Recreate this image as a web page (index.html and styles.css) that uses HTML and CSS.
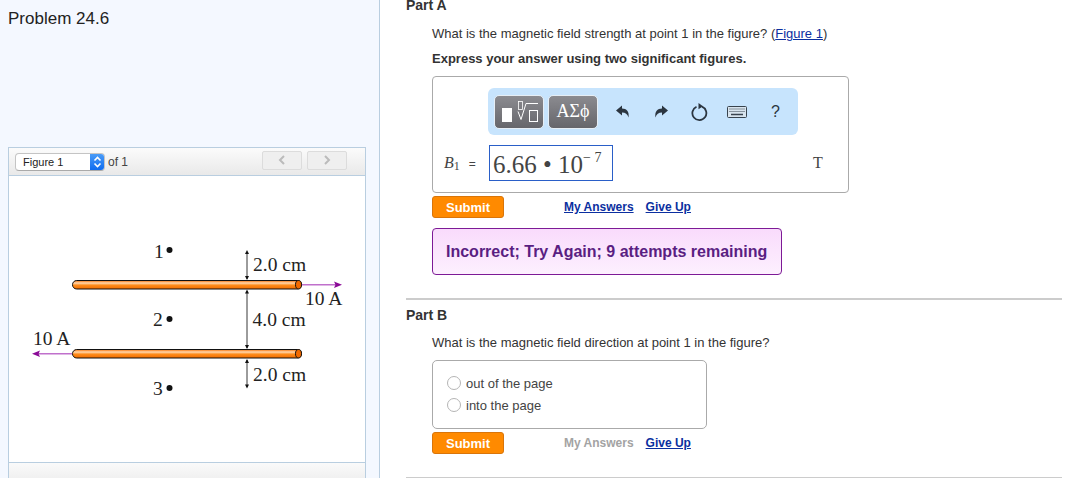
FILE: index.html
```html
<!DOCTYPE html>
<html lang="en">
<head>
<meta charset="UTF-8">
<meta name="viewport" content="width=device-width, initial-scale=1.0">
<title>Problem 24.6</title>
<link rel="stylesheet" href="styles.css">
</head>
<body>

<div class="page">
  <aside class="sidebar">
    <h1 class="problem-title">Problem 24.6</h1>

    <div class="figure-panel">
      <div class="figure-toolbar">
        <div class="figure-select">
          <span class="figure-select-label">Figure 1</span>
          <span class="figure-select-arrows">
            <svg width="9" height="12" viewBox="0 0 9 12"><path d="M1.5 4.5 L4.5 1.5 L7.5 4.5 M1.5 7.5 L4.5 10.5 L7.5 7.5" fill="none" stroke="#fff" stroke-width="1.6"/></svg>
          </span>
        </div>
        <span class="figure-count">of 1</span>
        <div class="figure-nav">
          <button class="nav-button"><svg width="8" height="10" viewBox="0 0 8 10"><path d="M6 1 L2 5 L6 9" fill="none" stroke="#bbb" stroke-width="2"/></svg></button>
          <button class="nav-button"><svg width="8" height="10" viewBox="0 0 8 10"><path d="M2 1 L6 5 L2 9" fill="none" stroke="#bbb" stroke-width="2"/></svg></button>
        </div>
      </div>

      <svg class="figure-image" width="356" height="286" viewBox="9 176 356 286">
        <defs>
          <linearGradient id="wire" x1="0" y1="0" x2="0" y2="1">
            <stop offset="0" stop-color="#f46c00"/>
            <stop offset="0.3" stop-color="#ffd8b0"/>
            <stop offset="0.55" stop-color="#ff8c1a"/>
            <stop offset="1" stop-color="#f06c00"/>
          </linearGradient>
        </defs>

        <line x1="302" y1="284.7" x2="336" y2="284.7" stroke="#c070cc" stroke-width="1.4"/>
        <path d="M342 284.7 L334 281.4 L335.5 284.7 L334 288 Z" fill="#8a0a96"/>
        <line x1="72" y1="353.7" x2="38" y2="353.7" stroke="#c070cc" stroke-width="1.4"/>
        <path d="M32 353.7 L40 350.4 L38.5 353.7 L40 357 Z" fill="#8a0a96"/>

        <rect x="72.5" y="280.5" width="229" height="8.5" rx="4.2" fill="url(#wire)" stroke="#111" stroke-width="1"/>
        <ellipse cx="298.500" cy="284.7" rx="3" ry="4.2" fill="#f26a00" stroke="#111" stroke-width="1"/>
        <rect x="72.5" y="349.5" width="229" height="8.5" rx="4.2" fill="url(#wire)" stroke="#111" stroke-width="1"/>
        <ellipse cx="298.500" cy="353.7" rx="3" ry="4.2" fill="#f26a00" stroke="#111" stroke-width="1"/>

        <g stroke="#222" stroke-width="0.9" fill="none">
          <line x1="247" y1="252" x2="247" y2="279"/>
          <line x1="247" y1="291" x2="247" y2="348"/>
          <line x1="247" y1="360" x2="247" y2="387"/>
        </g>
        <g fill="#111">
          <path d="M247 250 L245 254 H249 Z"/>
          <path d="M247 280 L245 276 H249 Z"/>
          <path d="M247 289.500 L245 293.500 H249 Z"/>
          <path d="M247 349 L245 345 H249 Z"/>
          <path d="M247 359 L245 363 H249 Z"/>
          <path d="M247 388.500 L245 384.500 H249 Z"/>
          <circle cx="169.500" cy="250" r="3"/>
          <circle cx="169.500" cy="319" r="3"/>
          <circle cx="169.500" cy="388" r="3"/>
        </g>

        <g class="figure-text">
          <text x="154" y="257.500">1</text>
          <text x="153" y="325.500">2</text>
          <text x="153" y="395">3</text>
          <text x="253" y="271">2.0 cm</text>
          <text x="252.500" y="326">4.0 cm</text>
          <text x="253" y="381">2.0 cm</text>
          <text x="305" y="304.500">10 A</text>
          <text x="33" y="345">10 A</text>
        </g>
      </svg>

      <div class="figure-footer"></div>
    </div>
  </aside>

  <main class="content">
    <h2 class="part-title part-a">Part A</h2>
    <div class="part-body">
      <p class="question">What is the magnetic field strength at point 1 in the figure? (<a href="#">Figure 1</a>)</p>
      <p class="instruction">Express your answer using two significant figures.</p>

      <div class="answer-box">
        <div class="math-toolbar">
          <button class="tool-button tool-templates">
            <svg width="38" height="32" viewBox="0 0 38 32">
              <rect x="2" y="12" width="10" height="14" fill="#fff"/>
              <rect x="18.500" y="5.500" width="4" height="8" fill="none" stroke="#fff" stroke-width="0.8"/>
              <path d="M18 15.500 L21 23.500 L26 7.500 H38" fill="none" stroke="#fff" stroke-width="1"/>
              <rect x="29.500" y="14.500" width="8" height="11" fill="none" stroke="#fff"/>
            </svg>
          </button>
          <button class="tool-button tool-symbols">&Alpha;&Sigma;&#981;</button>
          <span class="tool-icon icon-undo">
            <svg width="16" height="16" viewBox="0 0 16 16"><path d="M1 6.500 L7 1.500 V4.500 C11.500 4.500 14.500 7.500 13.500 13.500 C12.500 10 10.500 8.500 7 8.500 V11.500 Z" fill="#2b3540"/></svg>
          </span>
          <span class="tool-icon icon-redo">
            <svg width="16" height="16" viewBox="0 0 16 16"><path d="M15 6.500 L9 1.500 V4.500 C4.500 4.500 1.500 7.500 2.500 13.500 C3.500 10 5.500 8.500 9 8.500 V11.500 Z" fill="#2b3540"/></svg>
          </span>
          <span class="tool-icon icon-reset">
            <svg width="18" height="18" viewBox="0 0 18 18"><path d="M6.500 3.700 A7 7 0 1 0 12 3.600" fill="none" stroke="#2b3540" stroke-width="1.800"/><path d="M8.500 0 L13 3.200 L8.500 6.200 Z" fill="#2b3540"/></svg>
          </span>
          <span class="tool-icon icon-keyboard">
            <svg width="20" height="12" viewBox="0 0 20 12">
              <rect x="0.500" y="0.500" width="19" height="11" rx="1" fill="#d8e4ee" stroke="#38434e"/>
              <path d="M2.500 3 H17.500 M2.500 5.500 H17.500" stroke="#38434e" stroke-dasharray="1 1"/>
              <path d="M4 8.500 H16" stroke="#38434e" stroke-width="1.500"/>
            </svg>
          </span>
          <span class="tool-help">?</span>
        </div>

        <div class="answer-row">
          <span class="answer-label"><i>B</i><sub>1</sub><span class="equals">=</span></span>
          <div class="answer-input">6.66 &bull; 10<sup>&minus; 7</sup></div>
          <span class="answer-unit">T</span>
        </div>
      </div>

      <div class="action-row">
        <button class="submit-button">Submit</button>
        <a class="action-link" href="#">My Answers</a>
        <a class="action-link" href="#">Give Up</a>
      </div>

      <div class="feedback">Incorrect; Try Again; 9 attempts remaining</div>
    </div>

    <hr class="part-rule">

    <h2 class="part-title part-b">Part B</h2>
    <div class="part-body">
      <p class="question question-b">What is the magnetic field direction at point 1 in the figure?</p>

      <div class="choice-box">
        <label class="choice"><span class="radio"></span>out of the page</label>
        <label class="choice"><span class="radio"></span>into the page</label>
      </div>

      <div class="action-row action-row-b">
        <button class="submit-button">Submit</button>
        <span class="action-link action-disabled">My Answers</span>
        <a class="action-link" href="#">Give Up</a>
      </div>
    </div>

    <hr class="part-rule rule-bottom">
  </main>
</div>

</body>
</html>
```

FILE: styles.css
```css
html, body {
  margin: 0;
  height: 478px;
  overflow: hidden;
  background-color: #fff;
  font-family: 'Liberation Sans', Arial, sans-serif;
  color: #333;
}
.page {
  display: flex;
  height: 478px;
  overflow: hidden;
}

/* left column */
.sidebar {
  width: 379px;
  height: 478px;
  flex-shrink: 0;
  background-color: #f4f8ff;
  border-right: 1px solid #b9cee0;
}
.problem-title {
  margin: 0;
  padding: 10px 0 0 8px;
  height: 138px;
  box-sizing: border-box;
  font-size: 17px;
  line-height: 18px;
  font-weight: normal;
  color: #222;
}
.figure-panel {
  width: 356px;
  margin: 9px 0 0 8px;
  background-color: #fff;
  border: 1px solid #b9cee0;
  border-bottom: none;
}
.figure-toolbar {
  display: flex;
  align-items: center;
  height: 27px;
  padding-left: 6px;
  background: linear-gradient(#fbfbfb, #e9e9e9);
  border-bottom: 1px solid #b9cee0;
}
.figure-select {
  display: flex;
  width: 90px;
  height: 18px;
  box-sizing: border-box;
  background-color: #fff;
  border: 1px solid #c4c4c4;
  border-bottom-color: #aaa;
  border-radius: 4px;
  overflow: hidden;
}
.figure-select-label {
  flex: 1;
  padding-left: 7px;
  font-size: 11px;
  line-height: 16px;
  color: #222;
}
.figure-select-arrows {
  display: flex;
  align-items: center;
  justify-content: center;
  width: 14px;
  background: linear-gradient(#4a9cf8, #0f6cf0);
}
.figure-count {
  margin-left: 3px;
  font-size: 12px;
  color: #444;
}
.figure-nav {
  display: flex;
  gap: 5px;
  margin-left: 134px;
  margin-top: -3px;
}
.nav-button {
  display: flex;
  align-items: center;
  justify-content: center;
  width: 40px;
  height: 19px;
  padding: 0;
  background: #efefef;
  border: 1px solid #dcdcdc;
  border-radius: 2px;
}
.figure-image {
  display: block;
}
.figure-text text {
  font-family: 'Liberation Serif', 'Times New Roman', serif;
  font-size: 19.500px;
  fill: #222;
}
.figure-footer {
  height: 16px;
  background: linear-gradient(#fafafa, #f0f0f0);
  border-top: 1px solid #b9cee0;
}

/* right column */
.content {
  width: 656px;
  margin-left: 26px;
}
.part-title {
  margin: 0;
  font-size: 14px;
  line-height: 15px;
  font-weight: bold;
  color: #333;
}
.part-a {
  margin-top: -2px;
}
.part-b {
  margin-top: 8px;
}
.part-body {
  padding-left: 26px;
}
.question {
  margin: 13px 0 0;
  font-size: 13px;
  line-height: 16px;
  color: #333;
}
.question a {
  color: #0b2fa0;
}
.question-b {
  margin-top: 12px;
}
.instruction {
  margin: 9px 0 0;
  font-size: 13px;
  line-height: 16px;
  font-weight: bold;
  color: #333;
}
.answer-box {
  width: 417px;
  height: 117px;
  box-sizing: border-box;
  margin-top: 9px;
  padding: 11px 0 0 10px;
  border: 1px solid #aaa;
  border-radius: 4px;
}
.math-toolbar {
  display: flex;
  align-items: center;
  width: 310px;
  height: 47px;
  box-sizing: border-box;
  margin-left: 45px;
  padding-left: 6px;
  background-color: #c7e4fd;
  border-radius: 6px;
}
.tool-button {
  height: 34px;
  padding: 0;
  color: #fff;
  background: linear-gradient(#8b8b90, #66666b);
  border: 1px solid #e6eef5;
  border-radius: 5px;
}
.tool-templates {
  display: flex;
  align-items: center;
  justify-content: center;
  width: 50px;
}
.tool-symbols {
  width: 50px;
  margin-left: 4px;
  font-family: 'Liberation Serif', serif;
  font-size: 18px;
}
.tool-icon {
  display: flex;
  align-items: center;
  justify-content: center;
  height: 20px;
}
.icon-undo {
  width: 20px;
  margin-left: 15px;
}
.icon-redo {
  width: 20px;
  margin-left: 18px;
}
.icon-reset {
  width: 20px;
  margin-left: 18px;
}
.icon-keyboard {
  width: 20px;
  margin-left: 18px;
}
.tool-help {
  margin-left: 24px;
  font-size: 16px;
  color: #2b3540;
}
.answer-row {
  display: flex;
  align-items: center;
  height: 36px;
  margin-top: 10px;
}
.answer-label {
  width: 45px;
  margin-left: 1px;
  font-family: 'Liberation Serif', serif;
  font-size: 16px;
  color: #444;
  white-space: nowrap;
}
.answer-label sub {
  font-size: 12px;
  line-height: 0;
  vertical-align: -2px;
}
.equals {
  margin-left: 9px;
  font-family: 'Liberation Sans', sans-serif;
  font-size: 12px;
}
.answer-input {
  width: 124px;
  height: 36px;
  box-sizing: border-box;
  padding-left: 3px;
  border: 1px solid #2a5fc8;
  font-family: 'Liberation Serif', serif;
  font-size: 25px;
  line-height: 38px;
  color: #444;
  white-space: nowrap;
}
.answer-input sup {
  font-size: 14px;
  line-height: 0;
  vertical-align: 11px;
}
.answer-unit {
  margin-left: 200px;
  font-family: 'Liberation Serif', serif;
  font-size: 16px;
  color: #444;
}
.action-row {
  display: flex;
  align-items: center;
  margin-top: 3px;
}
.submit-button {
  width: 72px;
  height: 22px;
  padding: 0;
  font-family: 'Liberation Sans', sans-serif;
  font-size: 13px;
  font-weight: bold;
  color: #fff;
  background-color: #ff8a00;
  border: 1px solid #d9750a;
  border-radius: 3px;
}
.action-link {
  margin-left: 12px;
  font-size: 12px;
  font-weight: bold;
  color: #0b2fa0;
}
.submit-button + .action-link {
  margin-left: 60px;
}
.action-disabled {
  color: #a3a3a3;
}
.feedback {
  width: 350px;
  height: 47px;
  box-sizing: border-box;
  margin-top: 10px;
  padding-left: 13px;
  font-size: 16px;
  line-height: 45px;
  font-weight: bold;
  color: #5a1e82;
  background: linear-gradient(#f9dbfc, #fdf0fe);
  border: 1px solid #7d1a96;
  border-radius: 4px;
  white-space: nowrap;
}
.part-rule {
  height: 2px;
  margin: 23px 0 0;
  background-color: #ccc;
  border: none;
}
.rule-bottom {
  height: 1px;
}
.choice-box {
  width: 275px;
  height: 69px;
  box-sizing: border-box;
  margin-top: 9px;
  padding-top: 11px;
  border: 1px solid #aaa;
  border-radius: 5px;
}
.choice {
  display: flex;
  align-items: center;
  height: 22px;
  padding-left: 14px;
  font-size: 13px;
  color: #444;
}
.radio {
  width: 12px;
  height: 12px;
  margin-right: 5px;
  background-color: #fff;
  border: 1px solid #b5b5b5;
  border-radius: 50%;
}
```
